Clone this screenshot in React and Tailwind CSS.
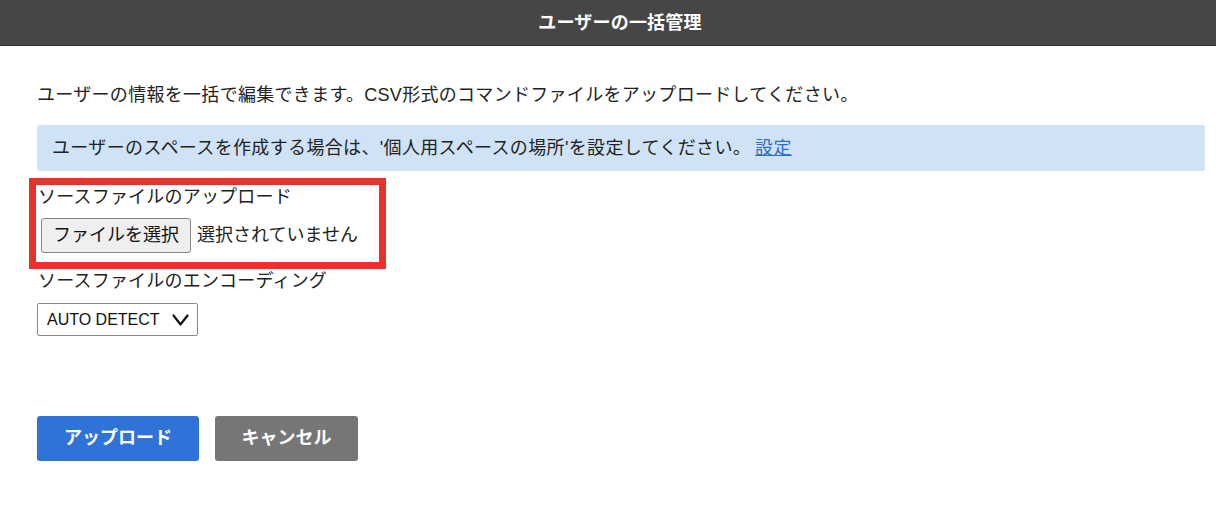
import React from 'react';

const font = { fontFamily: '"Liberation Sans", "Noto Sans CJK JP", sans-serif' };

const Header = () => (
  <div className="h-[46px] bg-[#464646] border-b border-[#2e2e2e] flex items-center justify-center pl-[24px]">
    <h1 className="text-white font-bold text-[18px] leading-none tracking-[0.2px]">ユーザーの一括管理</h1>
  </div>
);

const App = () => {
  return (
    <div className="min-h-[508px] bg-white text-[#222]" style={font}>
      <Header />
      <div className="px-[37px] pr-[11px]">
        <p className="mt-[36px] text-[18px] leading-[27px] tracking-[0.3px]">
          ユーザーの情報を一括で編集できます。CSV形式のコマンドファイルをアップロードしてください。
        </p>

        <div className="mt-[16px] h-[46px] bg-[#cfe2f6] rounded-[3px] flex items-center pl-[15px] text-[18px] tracking-[0.35px]">
          <span>ユーザーのスペースを作成する場合は、'個人用スペースの場所'を設定してください。</span>
          <a href="#" className="ml-[4px] text-[#2c6fca] underline">設定</a>
        </div>

        {/* upload section, with the red highlight drawn over it */}
        <div className="relative mt-[14px]">
          <span className="absolute left-[-8px] top-[-7px] w-[357px] h-[91px] border-[7px] border-[#e5332a] pointer-events-none" />
          <div className="text-[18px] leading-[24px] pl-px tracking-[0.2px]">ソースファイルのアップロード</div>
          <div className="mt-[9px] flex items-center pl-[4px] text-[18px]">
            <button className="h-[35px] px-[11px] bg-[#efefef] border border-[#858585] rounded-[3px] text-[#111]">
              ファイルを選択
            </button>
            <span className="ml-[6px]">選択されていません</span>
          </div>
        </div>

        <div className="mt-[16px] text-[18px] leading-[24px] pl-px tracking-[0.2px]">ソースファイルのエンコーディング</div>
        <div className="mt-[10px] w-[161px] h-[33px] border border-[#8a8a8a] rounded-[2px] flex items-center justify-between pl-[9px] pr-[8px] text-[16px] text-[#111]">
          <span>AUTO DETECT</span>
          <svg width="17" height="12" viewBox="0 0 17 12" fill="none" stroke="#111" strokeWidth="2.2" strokeLinecap="round" strokeLinejoin="round">
            <path d="M1.5 1.5 L8.5 10.5 L15.5 1.5" />
          </svg>
        </div>

        <div className="mt-[80px] flex gap-[16px]">
          <button className="w-[162px] h-[45px] bg-[#2f73d9] rounded-[3px] text-white font-bold text-[18px]">アップロード</button>
          <button className="w-[143px] h-[45px] bg-[#767676] rounded-[3px] text-white font-bold text-[18px]">キャンセル</button>
        </div>
      </div>
    </div>
  );
};

export default App;
